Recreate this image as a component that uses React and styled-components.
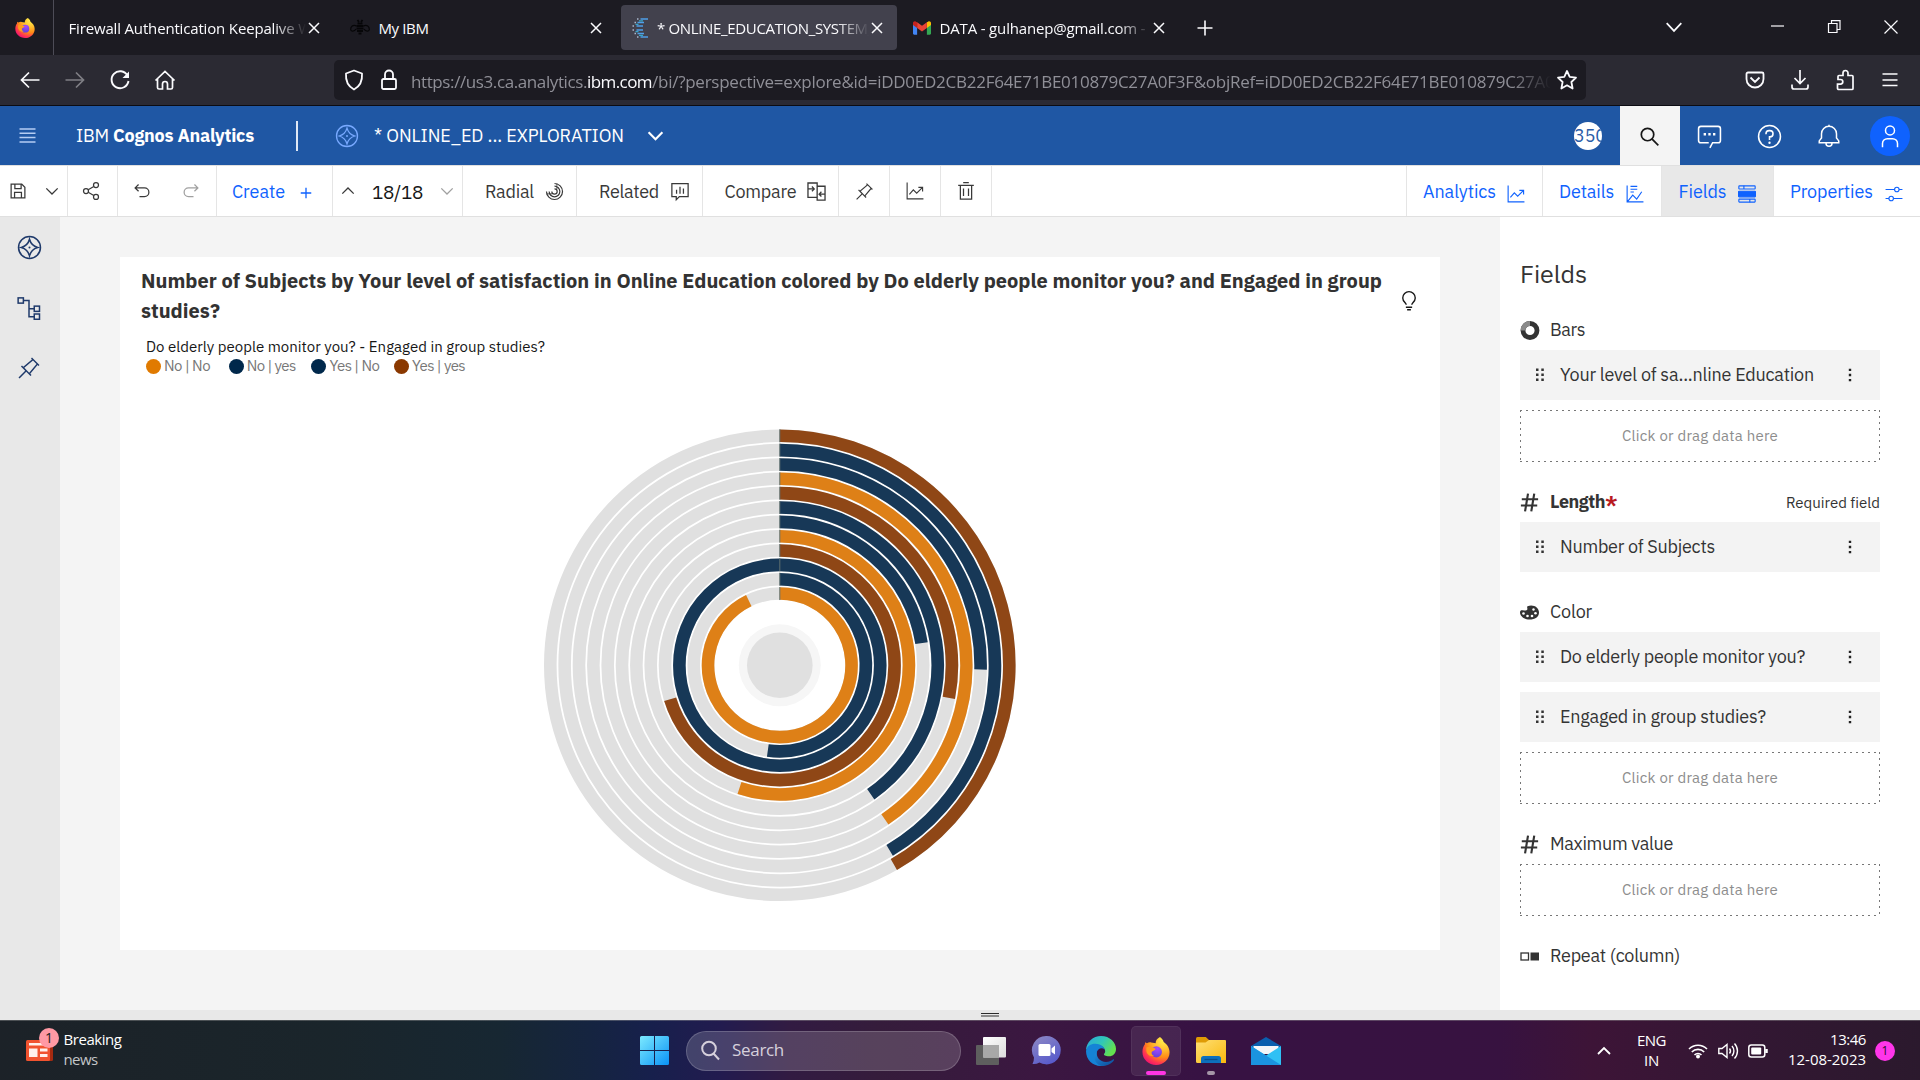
import React, { useLayoutEffect, useRef } from "react";
import styled, { createGlobalStyle, css } from "styled-components";

const PLEX = `"IBM Plex Sans", Roboto, "Liberation Sans", sans-serif`;
const SEGOE = `"Segoe UI", "Open Sans", "Noto Sans", sans-serif`;

const GlobalStyle = createGlobalStyle`
  *, *::before, *::after { box-sizing: border-box; }
  body { margin: 0; background: #f3f3f3; overflow: hidden; }
`;

/* ---------- text that keeps a set measure ---------- */
const FitSpan = styled.span`
  display: inline-block;
  flex: none;
  white-space: pre;
`;

function Fit({ w, children }) {
  const ref = useRef(null);
  useLayoutEffect(() => {
    const el = ref.current;
    el.style.letterSpacing = "0px";
    const natural = el.getBoundingClientRect().width;
    el.style.letterSpacing = `${(w - natural) / el.textContent.length}px`;
  }, [w, children]);
  return <FitSpan ref={ref}>{children}</FitSpan>;
}

/* ---------- icons ---------- */
const Svg = styled.svg`
  display: block;
  flex: none;
  overflow: visible;
`;

const Glyph = ({ size = 20, sw = 2, vb = 32, children }) => (
  <Svg width={size} height={size} viewBox={`0 0 ${vb} ${vb}`} fill="none" stroke="currentColor" strokeWidth={sw}>
    {children}
  </Svg>
);

const PATHS = {
  save: <path d="M5 5H22L27 10V27H5Z M11 5v7h10V5 M10.5 27V18h11v9" />,
  share: (
    <>
      <circle cx="8" cy="16" r="4" />
      <circle cx="24" cy="6.5" r="4" />
      <circle cx="24" cy="25.5" r="4" />
      <path d="M11.5 14 20.5 8.7M11.5 18l9 5.300" />
    </>
  ),
  undo: <path d="M10.500 5.500 5 11l5.500 5.500M5.500 11H20a7 7 0 0 1 0 14H12" />,
  redo: <path d="M21.500 5.500 27 11l-5.500 5.500M26.500 11H12a7 7 0 0 0 0 14h8" />,
  plus: <path d="M16 4V28M4 16H28" />,
  down: <path d="M3 10 16 23 29 10" />,
  up: <path d="M3 22 16 9 29 22" />,
  radial: (
    <>
      <path d="M16 2.500A13.500 13.500 0 1 1 2.500 16" />
      <path d="M16 7a9 9 0 1 1-9 9" />
      <path d="M16 11.500a4.500 4.500 0 1 1-4.500 4.500" />
      <path d="M20 2.500v4M20 8v4M2.500 20h5M8 20h4" strokeWidth="1.500" />
    </>
  ),
  related: <path d="M3 4H29V25H15l-5 5V25H3ZM10.500 14v6.500M16 9v11.500M21.500 12v8.500" />,
  compare: (
    <path d="M17 25H3V3H17V29H29V8H17M3 12h9M9 8.500l3.500 3.500L9 15.500M28 20h-7M23.500 16.500 20 20l3.500 3.500" />
  ),
  pin: (
    <path
      fill="currentColor"
      stroke="none"
      d="M28.590 13.310 30 11.900 20 2 18.690 3.420 19.870 4.600 8.380 14.320 6.660 12.610 5.250 14l5.660 5.680L2 28.580 3.410 30l8.910-8.910L18 26.750l1.390-1.420-1.710-1.710L27.400 12.130ZM16.260 22.200 9.800 15.740 21.290 6 26 10.710Z"
    />
  ),
  line: <path d="M2 1V30H31M6 22l7-8 6 6 10-10M22 9.500h7.500V17" />,
  trash: <path d="M12 12V24M20 12V24M3.500 7H28.500M7 7V29H25V7M11.500 2.500h9" />,
  details: <path d="M2 1V30H31M8 2.500H20M8 7.500H20M8 12.500h6M3 29l9-11 7 7 9-13" />,
  fields: (
    <>
      <rect x="1.500" y="1.500" width="29" height="5.500" rx="1" />
      <rect x="1" y="11" width="30" height="10" rx="1" fill="currentColor" />
      <rect x="1.500" y="25" width="29" height="5.500" rx="1" />
      <path d="M10.500 1.500V7M21 25v5.500" />
    </>
  ),
  sliders: (
    <>
      <circle cx="21" cy="8" r="4" />
      <circle cx="11" cy="24" r="4" />
      <path d="M1 8H17M25 8H31M1 24H7M15 24H31" />
    </>
  ),
  explore: (
    <>
      <circle cx="16" cy="16" r="14" />
      <path d="M16 5.500C17.500 11 21 14.500 26.500 16 21 17.500 17.500 21 16 26.500 14.500 21 11 17.500 5.500 16 11 14.500 14.500 11 16 5.500Z" />
      <circle cx="16" cy="16" r="1.300" fill="currentColor" stroke="none" />
    </>
  ),
  tree: (
    <>
      <rect x="1.500" y="2.500" width="7" height="7" />
      <rect x="23" y="13.500" width="7" height="7" />
      <rect x="23" y="24" width="7" height="7" />
      <path d="M8.500 6H16V27.500H23M16 17H23" />
    </>
  ),
  search: (
    <>
      <circle cx="13" cy="13" r="9.500" />
      <path d="M20 20 29.500 29.500" />
    </>
  ),
  chat: (
    <>
      <path d="M15 24H5a3 3 0 0 1-3-3V6a3 3 0 0 1 3-3H27a3 3 0 0 1 3 3V21a3 3 0 0 1-3 3H20L16.500 30.500" />
      <path d="M8.500 13h3M14.500 13h3M20.500 13h3" strokeWidth="3.200" />
    </>
  ),
  help: (
    <>
      <circle cx="16" cy="16" r="14" />
      <path d="M11.500 13v-.5a4 4 0 0 1 4-4h1a4 4 0 0 1 0 8H16V20.500" />
      <circle cx="16" cy="24" r="1.500" fill="currentColor" stroke="none" />
    </>
  ),
  bell: <path d="M16 1V4M3 25V22.500L6 18.500V13a10 10 0 0 1 20 0v5.500l3 4V25ZM12 25.500a4 4 0 0 0 8 0" />,
  user: (
    <>
      <circle cx="16" cy="8.500" r="6" />
      <path d="M6 31V26a6.500 6.500 0 0 1 6.500-6.500h7A6.500 6.500 0 0 1 26 26v5" />
    </>
  ),
  bulb: <path d="M11 26h10M13 30h6M11.500 22c0-3-5.500-5-5.500-11a10 10 0 0 1 20 0c0 6-5.500 8-5.500 11" />,
  hash: <path d="M3 10.500H30.500M1.500 21H29M13.500 1 8.500 31M24 1 19 31" strokeWidth="3.600" />,
};

const Icon = ({ name, size, sw }) => (
  <Glyph size={size} sw={sw}>
    {PATHS[name]}
  </Glyph>
);

const Firefox = ({ size, id }) => (
  <Svg width={size} height={size} viewBox="0 0 32 32">
    <defs>
      <radialGradient id={`${id}a`} cx="0.78" cy="0.1" r="1.05">
        <stop offset="0" stopColor="#fff44f" />
        <stop offset="0.35" stopColor="#ffbd2e" />
        <stop offset="0.6" stopColor="#ff8a16" />
        <stop offset="0.8" stopColor="#ff3750" />
        <stop offset="1" stopColor="#eb0878" />
      </radialGradient>
      <radialGradient id={`${id}b`} cx="0.6" cy="0.2" r="0.9">
        <stop offset="0" stopColor="#a84bff" />
        <stop offset="1" stopColor="#5b3fd6" />
      </radialGradient>
    </defs>
    <path
      fill={`url(#${id}a)`}
      d="M20.500 0c2 1.200 3.700 3.500 4.300 5.800C28.600 8.500 31.500 12.500 31.500 17.500 31.500 25.800 24.600 32 16.200 32 7.500 32 .5 25.600.5 17.200c0-3.600 1-6.500 2.700-8.600L3.600 6l2 1.200C7 6.200 9 5.800 10.500 6.200L15.600 7C15.500 4 17.500 1.500 20.500 0Z"
    />
    <circle cx="16.500" cy="17" r="6.300" fill={`url(#${id}b)`} />
    <path fill="#ff9d1e" d="M5 12c4-2 7.500 0 10.500 1.300 0 2.200-3.500 2-4.500 4-.5 1.700 1 3.700 3 4.200-5 1.500-8.500-2-9-5.500Z" />
  </Svg>
);

const Gmail = () => (
  <Svg width="18" height="14" viewBox="0 0 24 18">
    <path fill="#4285f4" d="M0 3v13.400C0 17.300.7 18 1.600 18H5.500V7Z" />
    <path fill="#34a853" d="M18.500 18h3.900c.9 0 1.600-.7 1.600-1.600V3l-5.500 4Z" />
    <path fill="#fbbc04" d="M18.500 1.200V9L24 4.900V2.400C24 .4 21.700-.7 20.100.5Z" />
    <path fill="#ea4335" d="M5.500 9V1.200L12 6l6.500-4.800V9L12 13.800Z" />
    <path fill="#c5221f" d="M0 2.400v2.500L5.500 9V1.200L3.900.5C2.300-.7 0 .4 0 2.400Z" />
  </Svg>
);

const CognosMark = () => (
  <Svg width="17" height="20" viewBox="0 0 17 20" fill="none" strokeWidth="1.300">
    <path stroke="#4f9fe8" d="M8.500 1H16M5.500 4.500H12M4.500 8H11M4.500 12H11M5.500 15.500H12M8.500 19H16" />
    <path stroke="#38a6c9" d="M7 2.800h4M3.500 6.300h3M3.500 13.700h3M7 17.300h4" />
    <path stroke="#a9b7cc" d="M5 1h1.500M2.500 4.500H4M.5 8H2M.5 12H2M2.500 15.500H4M5 19h1.500" />
  </Svg>
);

const Bee = () => (
  <Svg width="20" height="16" viewBox="0 0 20 16" fill="none" stroke="#060608" strokeWidth="1.800">
    <path d="M7.500 3.500h5M6.500 6h7M6.500 8.500h7M7 11h6M8.500 13.500h3M7.500 0 9 2M12.500 0 11 2" />
    <path strokeWidth="1.200" d="M6.500 6C3 4 .5 7 .7 9.500.9 12 4.500 11.500 6 9M13.500 6c3.500-2 6 1 5.800 3.500-.2 2.500-3.800 2-5.300-.5" />
  </Svg>
);

const Edge = () => (
  <Svg width="30" height="30" viewBox="0 0 30 30">
    <defs>
      <linearGradient id="edTop" x1="0" y1="0" x2="1" y2="0.5">
        <stop offset="0" stopColor="#2aa6dd" />
        <stop offset="0.55" stopColor="#31c7b8" />
        <stop offset="1" stopColor="#64e04f" />
      </linearGradient>
      <linearGradient id="edLow" x1="0" y1="0" x2="1" y2="1">
        <stop offset="0" stopColor="#1b8fe0" />
        <stop offset="1" stopColor="#0f4a96" />
      </linearGradient>
    </defs>
    <path fill="url(#edTop)" d="M0 14C.5 6 7 0 15 0c9 0 15 6.500 15 13 0 4.500-3 7.300-7 7.300-3.500 0-5.500-1.300-5-2.300 1.300-1.200 1.500-2.800.8-4.500C16.500 8 5 6 0 14Z" />
    <path fill="#1583d6" d="M0 15C1 8.500 8 6.300 13.500 8.500c3 1.200 5 3.200 5.300 5-3-2.500-7.300-1-8.300 3.500C9.500 22.500 13 28 18 29.700 8 31.500 0 24.500 0 15Z" />
    <path fill="url(#edLow)" d="M11 15.500c-1.500 5 3 10.500 9 10.500 3 0 5-1.200 7-2.500 1-.5 1.300.3.700 1.200C25 28 20 30 16 30 9.500 29 5.500 20 11 15.500Z" />
  </Svg>
);

const Folder = () => (
  <Svg width="30" height="27" viewBox="0 0 30 27">
    <defs>
      <linearGradient id="fo" x1="0" y1="0" x2="1" y2="1">
        <stop offset="0" stopColor="#ffdf75" />
        <stop offset="1" stopColor="#f9b90d" />
      </linearGradient>
    </defs>
    <path fill="#df9b05" d="M0 1.500Q0 0 1.500 0h8.300L13 3v4H0Z" />
    <path fill="url(#fo)" d="M0 5.500h9.500L13 3H29q1 0 1 1V26H1.500Q0 26 0 24.500Z" />
    <path fill="#0d70bd" d="M5 26V21.500q0-2.500 2.500-2.500h15q2.500 0 2.500 2.500V26Z" />
    <path stroke="#0a4f8c" strokeWidth="1.300" d="M8.500 22.500h13" />
  </Svg>
);

const Mail = () => (
  <Svg width="30" height="28" viewBox="0 0 30 28">
    <path fill="#0a5fae" d="M0 9 15 0 30 9v6H0Z" />
    <path fill="#f4f6f8" d="M2.500 9h25v8h-25Z" />
    <path fill="#2fc0f4" d="M0 9v19H30V9L15 18.500Z" />
    <path fill="#1b94e0" d="M0 9V28H30L15 18.500Z" />
  </Svg>
);

const TeamsChat = () => (
  <Svg width="29" height="29" viewBox="0 0 29 29">
    <defs>
      <linearGradient id="tc" x1="0.2" y1="0" x2="0.8" y2="1">
        <stop offset="0" stopColor="#8a86c4" />
        <stop offset="1" stopColor="#5457cc" />
      </linearGradient>
    </defs>
    <path fill="url(#tc)" d="M14.500 0a14.200 14.200 0 1 1-7 26.500Q4 28.500.5 28 2 25 2 21.500A14.200 14.200 0 0 1 14.500 0Z" />
    <rect x="6.500" y="8" width="12" height="12" rx="1.500" fill="#fff" />
    <path fill="#fff" d="M19.500 12.500 23 9.500v9L19.500 16Z" />
  </Svg>
);

const TaskView = () => (
  <Svg width="30" height="28" viewBox="0 0 30 28">
    <defs>
      <linearGradient id="tv" x1="0" y1="0" x2="1" y2="1">
        <stop offset="0" stopColor="#fff" />
        <stop offset="1" stopColor="#dcdcdc" />
      </linearGradient>
    </defs>
    <rect x="0" y="8" width="23" height="20" rx="1" fill="#5e5e5e" />
    <rect x="7" y="0" width="23" height="20.500" rx="1" fill="url(#tv)" />
    <rect x="7" y="8" width="16" height="12.500" fill="#a8a8a8" />
  </Svg>
);

const Windows = () => (
  <Svg width="29" height="29" viewBox="0 0 29 29">
    <defs>
      <linearGradient id="wi" x1="0" y1="0" x2="1" y2="1" gradientUnits="objectBoundingBox">
        <stop offset="0" stopColor="#7ceaff" />
        <stop offset="1" stopColor="#0a92f5" />
      </linearGradient>
    </defs>
    <path fill="url(#wi)" d="M1.500 0H14V14H0V1.500Q0 0 1.500 0ZM15 0h12.500Q29 0 29 1.500V14H15ZM0 15H14V29H1.500Q0 29 0 27.500ZM15 15H29v12.500Q29 29 27.500 29H15Z" />
  </Svg>
);

const NewsIcon = () => (
  <Svg width="27" height="21" viewBox="0 0 27 21">
    <rect x="14" y="0" width="13" height="21" rx="1.500" fill="#a52a10" />
    <rect x="0" y="0" width="24" height="21" rx="1.500" fill="#f1532f" />
    <path fill="#fff1ec" d="M3 3H21V5.500H3ZM3 8.500h8.500V17H3ZM14 8.500h7.500v3H14ZM14 14h7.500v3H14Z" />
  </Svg>
);

/* ---------- browser chrome ---------- */
const Screen = styled.div`
  width: 1920px;
  height: 1080px;
  display: flex;
  flex-direction: column;
  overflow: hidden;
  font-family: ${PLEX};
`;

const TabStrip = styled.div`
  height: 55px;
  flex: none;
  display: flex;
  align-items: center;
  background: #1c1b22;
  color: #fbfbfe;
  font: 15px/20px ${SEGOE};
`;

const PinnedTab = styled.div`
  width: 54px;
  height: 55px;
  padding-left: 15px;
  display: flex;
  align-items: center;
  border-right: 1px solid #4d4c57;
  margin-right: 3.500px;
`;

const Tab = styled.div`
  width: 276.500px;
  height: 45px;
  margin-right: 5px;
  padding: 0 14px 0 11px;
  display: flex;
  align-items: center;
  gap: 8.500px;
  border-radius: 4px;
  background: ${(p) => (p.$active ? "#42414d" : "transparent")};
`;

const TabTitle = styled.div`
  flex: 1;
  overflow: hidden;
  white-space: nowrap;
  margin-right: -6px;
  mask-image: ${(p) => (p.$fade ? "linear-gradient(to right, #000 calc(100% - 32px), transparent)" : "none")};
`;

const NewTab = styled.div`
  margin-left: 13px;
`;

const WindowControls = styled.div`
  margin-left: auto;
  display: flex;
  align-items: center;
  padding: 0 22px 2px 0;
  gap: 43.500px;
`;

const TabList = styled.div`
  margin-right: 45px;
`;

const NavBar = styled.div`
  height: 51px;
  flex: none;
  display: flex;
  align-items: center;
  padding: 0 20px 1px 20px;
  background: #2b2a33;
  border-bottom: 1px solid #0c0c12;
  color: #fbfbfe;
`;

const NavButtons = styled.div`
  display: flex;
  gap: 25px;
  width: 314px;
`;

const Dim = styled.span`
  opacity: 0.4;
`;

const UrlBar = styled.div`
  width: 1252px;
  height: 40px;
  padding: 0 9px 0 9px;
  display: flex;
  align-items: center;
  background: #1c1b22;
  border-radius: 5px;
`;

const LockSlot = styled.div`
  margin-left: 13px;
`;

const UrlText = styled.div`
  width: 1140px;
  margin: 4px auto 0 11px;
  overflow: hidden;
  white-space: nowrap;
  font: 17px/24px ${SEGOE};
  color: #8f8f97;
  mask-image: linear-gradient(to right, #000 calc(100% - 40px), transparent);
  b {
    font-weight: 400;
    color: #fbfbfe;
  }
`;

const NavTools = styled.div`
  margin-left: auto;
  display: flex;
  gap: 25px;
`;

const Cross = ({ size = 12, sw = 1.5 }) => (
  <Glyph size={size} vb={12} sw={sw}>
    <path d="M1 1 11 11M11 1 1 11" />
  </Glyph>
);

function Browser() {
  return (
    <>
      <TabStrip>
        <PinnedTab>
          <Firefox size={20} id="fs" />
        </PinnedTab>
        <Tab>
          <TabTitle $fade>
            <Fit w={247}>Firewall Authentication Keepalive Wi</Fit>
          </TabTitle>
          <Cross />
        </Tab>
        <Tab>
          <Bee />
          <TabTitle>
            <Fit w={50}>My IBM</Fit>
          </TabTitle>
          <Cross />
        </Tab>
        <Tab $active>
          <CognosMark />
          <TabTitle $fade>
            <Fit w={217}>* ONLINE_EDUCATION_SYSTEM_</Fit>
          </TabTitle>
          <Cross />
        </Tab>
        <Tab>
          <Gmail />
          <TabTitle $fade>
            <Fit w={206}>DATA - gulhanep@gmail.com -</Fit>
          </TabTitle>
          <Cross />
        </Tab>
        <NewTab>
          <Glyph size={16} vb={16} sw={1.6}>
            <path d="M8 .5V15.500M.5 8H15.500" />
          </Glyph>
        </NewTab>
        <WindowControls>
          <TabList>
            <Glyph size={18} sw={3}>
              <path d="M3 9 16 23 29 9" />
            </Glyph>
          </TabList>
          <Glyph size={13} vb={13} sw={1.2}>
            <path d="M0 6H13" />
          </Glyph>
          <Glyph size={13} vb={13} sw={1.2}>
            <path d="M.5 3.500H9V12.500H.5ZM3.500 3.500V.6H12V9.500H9" />
          </Glyph>
          <Glyph size={14} vb={14} sw={1.2}>
            <path d="M0.500 .5 13.500 13.500M13.500 .5 .5 13.500" />
          </Glyph>
        </WindowControls>
      </TabStrip>
      <NavBar>
        <NavButtons>
          <Glyph size={20} vb={20} sw={1.7}>
            <path d="M19.500 10H2M9 2.500 1.500 10 9 17.500" />
          </Glyph>
          <Dim>
            <Glyph size={20} vb={20} sw={1.7}>
              <path d="M.5 10H18M11 2.500 18.500 10 11 17.500" />
            </Glyph>
          </Dim>
          <Glyph size={20} vb={20} sw={1.9}>
            <path d="M17.500 5.500A8.500 8.500 0 1 0 18.500 11" />
            <path d="M19 1.500V8H12.500Z" fill="currentColor" stroke="none" />
          </Glyph>
          <Glyph size={20} vb={20} sw={1.7}>
            <path d="M.5 10.500 10 1.500 19.500 10.500M2.500 9V17.500q0 1.500 1.500 1.500H7.500V14a2.500 2.500 0 0 1 5 0V19H16q1.500 0 1.500-1.500V9" />
          </Glyph>
        </NavButtons>
        <UrlBar>
          <Glyph size={22} vb={22} sw={1.8}>
            <path d="M11 1.500 19 4.500C19.500 11 17.500 17 11 20.500 4.500 17 2.500 11 3 4.500Z" strokeLinejoin="round" />
          </Glyph>
          <LockSlot>
            <Glyph size={22} vb={22} sw={1.8}>
              <path d="M5.500 10h11A1.500 1.500 0 0 1 18 11.500v7a1.500 1.500 0 0 1-1.500 1.500h-11A1.500 1.500 0 0 1 4 18.500v-7A1.500 1.500 0 0 1 5.500 10ZM7 10V5.500a4 4 0 0 1 8 0V10" />
            </Glyph>
          </LockSlot>
          <UrlText>
            <Fit w={176}>https://us3.ca.analytics.</Fit>
            <b>
              <Fit w={65}>ibm.com</Fit>
            </b>
            <Fit w={929}>/bi/?perspective=explore&id=iDD0ED2CB22F64E71BE010879C27A0F3F&objRef=iDD0ED2CB22F64E71BE010879C27A0F3F</Fit>
          </UrlText>
          <Glyph size={20} vb={20} sw={1.8}>
            <path strokeLinejoin="round" d="M10 1 12.700 6.800 19 7.600 14.400 12 15.600 18.500 10 15.300 4.400 18.500 5.600 12 1 7.600 7.300 6.800Z" />
          </Glyph>
        </UrlBar>
        <NavTools>
          <Glyph size={20} vb={20} sw={1.8}>
            <path d="M3 2.500H17a1.500 1.500 0 0 1 1.500 1.500V9a8.500 8.500 0 0 1-17 0V4A1.500 1.500 0 0 1 3 2.500ZM5.500 7.500 10 12 14.500 7.500" />
          </Glyph>
          <Glyph size={20} vb={20} sw={1.7}>
            <path d="M10 0V13M4.500 8 10 13.500 15.500 8M2 14.500V17a2 2 0 0 0 2 2H16a2 2 0 0 0 2-2V14.500" />
          </Glyph>
          <Glyph size={20} vb={20} sw={1.7}>
            <path d="M3 19.500H17a1 1 0 0 0 1-1V6.500a1 1 0 0 0-1-1H13V3a2.500 2.500 0 0 0-5 0V5.500H4a1 1 0 0 0-1 1V9.500H5.500a2.300 2.300 0 0 1 0 4.600H2.500v4a1.300 1.300 0 0 0 1.300 1.400" />
          </Glyph>
          <Glyph size={20} vb={20} sw={1.6}>
            <path d="M2.500 4H17.500M2.500 10H17.500M2.500 15.500H17.500" />
          </Glyph>
        </NavTools>
      </NavBar>
    </>
  );
}

/* ---------- application header ---------- */
const Header = styled.header`
  height: 59px;
  flex: none;
  display: flex;
  align-items: center;
  padding-left: 19px;
  background: #1f57a4;
  color: #fff;
  font: 18px/24px ${PLEX};
  b {
    font-weight: 700;
  }
`;

const Brand = styled.div`
  margin-left: 40px;
  display: flex;
`;

const Divider = styled.div`
  width: 1.500px;
  height: 30px;
  margin: 0 37.500px 0 42px;
  background: #dfe8f5;
`;

const DocIcon = styled.div`
  color: #78a9ff;
  margin-right: 15px;
`;

const DocName = styled.div`
  display: flex;
  align-items: center;
  gap: 23px;
`;

const HeaderRight = styled.div`
  margin-left: auto;
  display: flex;
  align-items: center;
`;

const CountBadge = styled.div`
  width: 28px;
  height: 28px;
  margin-right: 18px;
  border-radius: 50%;
  overflow: hidden;
  background: #fff;
  color: #2a5ca8;
  font-size: 18px;
  line-height: 28px;
  white-space: nowrap;
`;

const HeaderButton = styled.div`
  width: 60px;
  height: 59px;
  padding: 1px 1.500px 0 0;
  display: flex;
  align-items: center;
  justify-content: center;
  ${(p) => p.$light && css`
    background: #f4f4f4;
    color: #161616;
  `}
`;

const Avatar = styled.div`
  width: 40px;
  height: 40px;
  margin-left: 1px;
  display: flex;
  align-items: center;
  justify-content: center;
  border-radius: 50%;
  background: #0f62fe;
`;

function AppHeader() {
  return (
    <Header>
      <Glyph size={17} vb={17} sw={1.5}>
        <path stroke="#b5cdf3" d="M.5 2H16.500M.5 6.300H16.500M.5 10.600H16.500M.5 15H16.500" />
      </Glyph>
      <Brand>
        <Fit w={37}>IBM </Fit>
        <b>
          <Fit w={141}>Cognos Analytics</Fit>
        </b>
      </Brand>
      <Divider />
      <DocIcon>
        <Icon name="explore" size={24} sw={1.7} />
      </DocIcon>
      <DocName>
        <Fit w={250}>* ONLINE_ED ... EXPLORATION</Fit>
        <Icon name="down" size={17} sw={4} />
      </DocName>
      <HeaderRight>
        <CountBadge>
          <Fit w={32}>350</Fit>
        </CountBadge>
        <HeaderButton $light>
          <Icon name="search" size={21} sw={2.6} />
        </HeaderButton>
        <HeaderButton>
          <Icon name="chat" size={25} />
        </HeaderButton>
        <HeaderButton>
          <Icon name="help" size={25} />
        </HeaderButton>
        <HeaderButton>
          <Icon name="bell" size={24} />
        </HeaderButton>
        <HeaderButton>
          <Avatar>
            <Icon name="user" size={24} />
          </Avatar>
        </HeaderButton>
      </HeaderRight>
    </Header>
  );
}

/* ---------- toolbar ---------- */
const Toolbar = styled.div`
  height: 52px;
  flex: none;
  display: flex;
  background: #fff;
  border-top: 1px solid #e0e0e0;
  border-bottom: 1px solid #e0e0e0;
  color: #393939;
  font: 18px/24px ${PLEX};
`;

const Cell = styled.div`
  width: ${(p) => p.$w}px;
  padding-left: ${(p) => p.$pl || 0}px;
  display: flex;
  align-items: center;
  gap: ${(p) => p.$gap || 0}px;
  justify-content: ${(p) => (p.$pl ? "flex-start" : "center")};
  border-right: 1px solid #e5e5e5;
  color: ${(p) => (p.$blue ? "#0f62fe" : "inherit")};
  ${FitSpan} {
    padding-top: 2px;
  }
`;

const PanelTabs = styled.div`
  margin-left: auto;
  display: flex;
  border-left: 1px solid #e5e5e5;
`;

const PanelTab = styled(Cell)`
  color: #0f62fe;
  background: ${(p) => (p.$selected ? "#e8e8e8" : "transparent")};
  border-right: ${(p) => (p.$plain ? "0" : "1px solid #e5e5e5")};
  svg {
    margin-top: 5px;
  }
`;

const Muted = styled.span`
  color: #a0a0a0;
`;

const Counter = styled.span`
  color: #161616;
  font-size: 19px;
`;

const Lowered = styled.span`
  padding-top: 4px;
`;

function AppToolbar() {
  return (
    <Toolbar>
      <Cell $w={68} $pl={8} $gap={17}>
        <Icon name="save" size={20} />
        <Icon name="down" size={14} sw={3} />
      </Cell>
      <Cell $w={50} $pl={13}>
        <Icon name="share" size={20} />
      </Cell>
      <Cell $w={99} $pl={14} $gap={28.5}>
        <Icon name="undo" size={20} />
        <Muted>
          <Icon name="redo" size={20} />
        </Muted>
      </Cell>
      <Cell $w={116} $pl={15} $gap={14} $blue>
        <Fit w={53}>Create</Fit>
        <Lowered>
          <Icon name="plus" size={14} sw={3} />
        </Lowered>
      </Cell>
      <Cell $w={130} $pl={8} $gap={17}>
        <Icon name="up" size={14} sw={3} />
        <Counter>
          <Fit w={51}>18/18</Fit>
        </Counter>
        <Muted>
          <Icon name="down" size={14} sw={3} />
        </Muted>
      </Cell>
      <Cell $w={114} $pl={22} $gap={11}>
        <Fit w={49}>Radial</Fit>
        <Icon name="radial" size={19} />
      </Cell>
      <Cell $w={126} $pl={22} $gap={11}>
        <Fit w={60}>Related</Fit>
        <Icon name="related" size={20} />
      </Cell>
      <Cell $w={136} $pl={21.5} $gap={9}>
        <Fit w={72}>Compare</Fit>
        <Icon name="compare" size={21} />
      </Cell>
      <Cell $w={51}>
        <Icon name="pin" size={19} />
      </Cell>
      <Cell $w={51}>
        <Icon name="line" size={18} />
      </Cell>
      <Cell $w={51}>
        <Icon name="trash" size={20} />
      </Cell>
      <PanelTabs>
        <PanelTab $w={136} $pl={16} $gap={11}>
          <Fit w={73}>Analytics</Fit>
          <Icon name="line" size={18} />
        </PanelTab>
        <PanelTab $w={119} $pl={16} $gap={12}>
          <Fit w={55}>Details</Fit>
          <Icon name="details" size={18} />
        </PanelTab>
        <PanelTab $w={112} $pl={16.5} $gap={11} $selected>
          <Fit w={48}>Fields</Fit>
          <Icon name="fields" size={18} />
        </PanelTab>
        <PanelTab $w={146} $pl={16} $gap={12} $plain>
          <Fit w={83}>Properties</Fit>
          <Icon name="sliders" size={18} />
        </PanelTab>
      </PanelTabs>
    </Toolbar>
  );
}

/* ---------- workspace ---------- */
const Workspace = styled.main`
  height: 793px;
  flex: none;
  display: flex;
`;

const Rail = styled.nav`
  width: 60px;
  padding: 18px 1.500px 0 0;
  display: flex;
  flex-direction: column;
  align-items: center;
  gap: 36px;
  background: #e8e8e8;
  color: #1f3a6b;
`;

const Canvas = styled.section`
  width: 1440px;
  padding: 40px 60px 60px;
  background: #f4f4f4;
`;

const Card = styled.article`
  height: 693px;
  padding: 9px 21px 0;
  background: #fff;
  color: #161616;
`;

const CardHead = styled.div`
  height: 60px;
  display: flex;
  justify-content: space-between;
  align-items: center;
`;

const CardTitle = styled.h1`
  margin: 0;
  display: flex;
  flex-direction: column;
  align-items: flex-start;
  font: 700 20px/30px ${PLEX};
  color: #323232;
`;

const Bulb = styled.div`
  padding-top: 10px;
`;

const LegendTitle = styled.div`
  height: 20px;
  margin: 11px 0 -1px 5px;
  font-size: 15px;
  line-height: 20px;
`;

const Legend = styled.div`
  height: 20px;
  padding-left: 5px;
  display: flex;
  font-size: 15px;
  line-height: 20px;
  color: #777;
`;

const LegendItem = styled.div`
  width: 82.700px;
  display: flex;
  align-items: center;
  gap: 3px;
  &::before {
    content: "";
    width: 15px;
    height: 15px;
    border-radius: 50%;
    background: ${(p) => p.$color};
  }
`;

const ChartSvg = styled.svg`
  display: block;
  margin: 49px auto 0;
`;

const BROWN = "#8f4716";
const NAVY = "#173857";
const ORANGE = "#de8017";

const BARS = [
  [BROWN, 150.2],
  [NAVY, 149.3],
  [NAVY, 91.2],
  [ORANGE, 145.7],
  [BROWN, 100.9],
  [NAVY, 144.8],
  [NAVY, 81.1],
  [ORANGE, 198.2],
  [BROWN, 252.8],
  [NAVY, 360],
  [NAVY, 188],
  [ORANGE, 334.4],
];

const CX = 239.8;
const CY = 240.3;

function RadialChart() {
  return (
    <ChartSvg width="480" height="480" viewBox="0 0 480 480" fill="none">
      {BARS.map(([color, angle], i) => {
        const r = 229.5 - i * 14.34;
        const a = (angle * Math.PI) / 180;
        const x = CX + r * Math.sin(a);
        const y = CY - r * Math.cos(a);
        return (
          <g key={i} strokeWidth="12.600">
            <circle cx={CX} cy={CY} r={r} stroke="#e0e0e0" />
            {angle === 360 ? (
              <circle cx={CX} cy={CY} r={r} stroke={color} />
            ) : (
              <path d={`M${CX} ${CY - r}A${r} ${r} 0 ${angle > 180 ? 1 : 0} 1 ${x} ${y}`} stroke={color} />
            )}
            <path d={`M${CX} ${CY - r - 6.5}v13`} stroke="#5f6f6e" strokeWidth="1" />
          </g>
        );
      })}
      <circle cx={CX} cy={CY} r="41" fill="#f6f6f6" />
      <circle cx={CX} cy={CY} r="32.800" fill="#e0e0e0" />
    </ChartSvg>
  );
}

const FieldsPanel = styled.aside`
  width: 420px;
  padding: 37px 40px 0 20px;
  background: #fff;
  color: #343434;
  font: 18px/24px ${PLEX};
  h2 {
    margin: 0 0 16px;
    font: 400 25px/40px ${PLEX};
  }
`;

const Slot = styled.section`
  display: flex;
  flex-direction: column;
  gap: 10px;
  margin-bottom: 20px;
`;

const SlotLabel = styled.div`
  height: 40px;
  margin-bottom: -10px;
  display: flex;
  align-items: center;
  gap: 11px;
  font-weight: ${(p) => (p.$bold ? 700 : 400)};
`;

const Star = styled.span`
  margin: 1px 0 0 -11px;
  color: #b81921;
  font-weight: 700;
  font-size: 21px;
`;

const Required = styled.span`
  margin-left: auto;
  padding-top: 2px;
  font-size: 15px;
  font-weight: 400;
`;

const FieldRow = styled.div`
  height: 50px;
  padding: 0 24px 0 16px;
  display: flex;
  align-items: center;
  gap: 16px;
  background: #f3f3f3;
  > svg:last-child {
    margin-left: auto;
  }
`;

const dashX = "repeating-linear-gradient(to right, #777 0 2px, transparent 2px 6px)";
const dashY = "repeating-linear-gradient(to bottom, #777 0 2px, transparent 2px 6px)";

const DropZone = styled.div`
  height: 52px;
  display: flex;
  align-items: center;
  justify-content: center;
  color: #8d8d8d;
  font-size: 15px;
  background: ${dashX} top / 100% 1px no-repeat, ${dashX} bottom / 100% 1px no-repeat,
    ${dashY} left / 1px 100% no-repeat, ${dashY} right / 1px 100% no-repeat;
`;

const Grip = () => (
  <Svg width="8" height="14" viewBox="0 0 8 14" fill="#333">
    {[0, 5, 10].map((y) => (
      <path key={y} d={`M0 ${y + 0.5}h2.500v2.500H0ZM5.300 ${y + 0.5}h2.500v2.500h-2.500Z`} />
    ))}
  </Svg>
);

const Kebab = () => (
  <Svg width="12" height="14" viewBox="0 0 12 14" fill="#222">
    <path d="M4.800 .7h2.400v2.400H4.800ZM4.800 5.800h2.400v2.400H4.800ZM4.800 10.900h2.400v2.400H4.800Z" />
  </Svg>
);

const Field = ({ w, children }) => (
  <FieldRow>
    <Grip />
    <Fit w={w}>{children}</Fit>
    <Kebab />
  </FieldRow>
);

const Drop = () => (
  <DropZone>
    <Fit w={156}>Click or drag data here</Fit>
  </DropZone>
);

const DonutIcon = () => (
  <Svg width="19" height="19" viewBox="0 0 19 19" fill="none" strokeWidth="4.800">
    <circle cx="10" cy="9.500" r="7" stroke="#333" />
    <path d="M3 9.500a7 7 0 0 1 7-7" stroke="#8a8a8a" />
  </Svg>
);

const PaletteIcon = () => (
  <Svg width="19" height="15" viewBox="0 0 19 15">
    <path
      fill="#333"
      d="M7.500 1.200C13-1 19 2 19 7.500 19 12 15 14.500 9.500 14.500 4 14.500 0 11 0 7.500 0 5.500 1 5 2.800 5.200 5 5.500 6.500 5.800 7.300 4.500 7.800 3.500 6.500 2 7.500 1.200Z"
    />
    <g fill="#fff">
      <circle cx="3.500" cy="8.500" r="1.300" />
      <circle cx="7.500" cy="11" r="1.300" />
      <circle cx="12" cy="11" r="1.300" />
      <circle cx="15.500" cy="8.300" r="1.300" />
      <circle cx="13.500" cy="4.500" r="1.200" />
    </g>
  </Svg>
);

const RepeatIcon = () => (
  <Svg width="19" height="9" viewBox="0 0 19 9">
    <rect x="1" y="1" width="7.500" height="7" fill="none" stroke="#333" strokeWidth="1.300" />
    <rect x="10.500" y="0.500" width="8.500" height="8" fill="#333" />
  </Svg>
);

function Work() {
  return (
    <Workspace>
      <Rail>
        <Icon name="explore" size={25} />
        <Icon name="tree" size={24} />
        <Icon name="pin" size={24} />
      </Rail>
      <Canvas>
        <Card>
          <CardHead>
            <CardTitle>
              <Fit w={1241}>
                Number of Subjects by Your level of satisfaction in Online Education colored by Do elderly people monitor you? and Engaged in group
              </Fit>
              <Fit w={79}>studies?</Fit>
            </CardTitle>
            <Bulb>
              <Icon name="bulb" size={20} sw={2.2} />
            </Bulb>
          </CardHead>
          <LegendTitle>
            <Fit w={399}>Do elderly people monitor you? - Engaged in group studies?</Fit>
          </LegendTitle>
          <Legend>
            <LegendItem $color="#e07a00">
              <Fit w={46}>No | No</Fit>
            </LegendItem>
            <LegendItem $color="#00284b">
              <Fit w={49}>No | yes</Fit>
            </LegendItem>
            <LegendItem $color="#00284b">
              <Fit w={50}>Yes | No</Fit>
            </LegendItem>
            <LegendItem $color="#8a3800">
              <Fit w={53}>Yes | yes</Fit>
            </LegendItem>
          </Legend>
          <RadialChart />
        </Card>
      </Canvas>
      <FieldsPanel>
        <h2>
          <Fit w={67}>Fields</Fit>
        </h2>
        <Slot>
          <SlotLabel>
            <DonutIcon />
            <Fit w={35}>Bars</Fit>
          </SlotLabel>
          <Field w={254}>Your level of sa...nline Education</Field>
          <Drop />
        </Slot>
        <Slot>
          <SlotLabel $bold>
            <Icon name="hash" size={19} />
            <Fit w={55}>Length</Fit>
            <Star>*</Star>
            <Required>
              <Fit w={94}>Required field</Fit>
            </Required>
          </SlotLabel>
          <Field w={155}>Number of Subjects</Field>
        </Slot>
        <Slot>
          <SlotLabel>
            <PaletteIcon />
            <Fit w={42}>Color</Fit>
          </SlotLabel>
          <Field w={245}>Do elderly people monitor you?</Field>
          <Field w={206}>Engaged in group studies?</Field>
          <Drop />
        </Slot>
        <Slot>
          <SlotLabel>
            <Icon name="hash" size={19} />
            <Fit w={123}>Maximum value</Fit>
          </SlotLabel>
          <Drop />
        </Slot>
        <Slot>
          <SlotLabel>
            <RepeatIcon />
            <Fit w={130}>Repeat (column)</Fit>
          </SlotLabel>
        </Slot>
      </FieldsPanel>
    </Workspace>
  );
}

const Splitter = styled.div`
  height: 10px;
  flex: none;
  padding: 3px 0 0 981px;
  background: #e8e8e8;
  &::before {
    content: "";
    display: block;
    width: 18px;
    height: 4px;
    border-top: 1px solid #2b2b2b;
    border-bottom: 2px solid #8d8d8d;
  }
`;

/* ---------- desktop taskbar ---------- */
const Taskbar = styled.footer`
  height: 60px;
  flex: none;
  display: flex;
  align-items: center;
  border-top: 1px solid rgba(150, 150, 150, 0.4);
  color: #fff;
  font: 15px/20px ${SEGOE};
  background: linear-gradient(
    to right,
    #1c2228 0, #1a252b 330px, #172732 500px, #152440 590px, #17204c 650px, #221b4f 720px,
    #321b42 790px, #351c3b 880px, #3b1741 1040px, #371243 1200px, #371240 1500px,
    #3d1437 1590px, #331733 1740px, #2b192d 1920px
  );
`;

const News = styled.div`
  width: 640px;
  padding-left: 26px;
  display: flex;
  align-items: center;
  gap: 10.500px;
`;

const NewsArt = styled.div`
  position: relative;
`;

const PinkBadge = styled.div`
  position: absolute;
  left: 13px;
  top: -12px;
  width: 20px;
  height: 20px;
  border-radius: 50%;
  background: #ff99a4;
  color: #1c1c1c;
  font-size: 14px;
  line-height: 20px;
  text-align: center;
`;

const Stack = styled.div`
  display: flex;
  flex-direction: column;
  align-items: ${(p) => p.$align || "flex-start"};
  padding-bottom: ${(p) => p.$lift ?? 4}px;
`;

const Faint = styled.span`
  color: #c3c6c8;
`;

const SearchPill = styled.div`
  width: 275px;
  height: 40px;
  margin: 0 15px 0 17px;
  padding: 0 0 1px 14px;
  display: flex;
  align-items: center;
  gap: 12px;
  border: 1px solid rgba(255, 255, 255, 0.18);
  border-radius: 20px;
  background: rgba(255, 255, 255, 0.17);
  color: #d6d0dc;
  font-size: 17px;
`;

const Pinned = styled.div`
  margin-left: 15px;
  display: flex;
`;

const AppButton = styled.div`
  position: relative;
  width: 50px;
  height: 50px;
  margin-right: 5px;
  display: flex;
  align-items: center;
  justify-content: center;
  border-radius: 5px;
  ${(p) => p.$active && css`
    background: rgba(255, 255, 255, 0.08);
    box-shadow: inset 0 0 0 1px rgba(255, 255, 255, 0.06);
  `}
  &::after {
    content: "";
    position: absolute;
    bottom: 1px;
    width: ${(p) => (p.$active ? 20 : p.$open ? 8 : 0)}px;
    height: 4px;
    border-radius: 2px;
    background: ${(p) => (p.$active ? "#ff35e4" : "#a596a8")};
  }
`;

const Tray = styled.div`
  margin-left: auto;
  padding-right: 25px;
  display: flex;
  align-items: center;
`;

const TrayIcons = styled.div`
  margin: 0 20px 0 22px;
  display: flex;
  gap: 10px;
`;

const Language = styled.div`
  margin-left: 26.500px;
`;

const Notice = styled.div`
  width: 20px;
  height: 20px;
  margin-left: 9px;
  border-radius: 50%;
  background: #ff35ea;
  color: #2b0d2a;
  font-size: 12px;
  line-height: 20px;
  text-align: center;
`;

function DesktopBar() {
  return (
    <Taskbar>
      <News>
        <NewsArt>
          <NewsIcon />
          <PinkBadge>1</PinkBadge>
        </NewsArt>
        <Stack>
          <Fit w={58}>Breaking</Fit>
          <Faint>
            <Fit w={34}>news</Fit>
          </Faint>
        </Stack>
      </News>
      <Windows />
      <SearchPill>
        <Glyph size={19} vb={19} sw={2}>
          <circle cx="8" cy="7.500" r="6.800" />
          <path d="M12.500 12.500 18 18.500" />
        </Glyph>
        <Fit w={52}>Search</Fit>
      </SearchPill>
      <TaskView />
      <Pinned>
        <AppButton>
          <TeamsChat />
        </AppButton>
        <AppButton>
          <Edge />
        </AppButton>
        <AppButton $active>
          <Firefox size={28} id="fl" />
        </AppButton>
        <AppButton $open>
          <Folder />
        </AppButton>
        <AppButton>
          <Mail />
        </AppButton>
      </Pinned>
      <Tray>
        <Glyph size={14} vb={14} sw={1.8}>
          <path d="M1 10 7 4 13 10" />
        </Glyph>
        <Language>
          <Stack $align="center" $lift={2}>
            <Fit w={29}>ENG</Fit>
            <Fit w={15}>IN</Fit>
          </Stack>
        </Language>
        <TrayIcons>
          <Glyph size={20} vb={20} sw={1.6}>
            <path d="M1 8a12.700 12.700 0 0 1 18 0M3.800 11a8.700 8.700 0 0 1 12.400 0M6.500 14a5 5 0 0 1 7 0" />
            <circle cx="10" cy="15.500" r="2" fill="currentColor" stroke="none" />
          </Glyph>
          <Glyph size={20} vb={20} sw={1.4}>
            <path d="M.8 7.500H4L9 3.500V16.500L4 12.500H.8ZM11.500 7.500a4 4 0 0 1 0 5M14 5a7.500 7.500 0 0 1 0 10M16.500 2.500a11 11 0 0 1 0 15" />
          </Glyph>
          <Glyph size={20} vb={20} sw={1.5}>
            <rect x=".8" y="4" width="16" height="12" rx="2.500" />
            <rect x="3.200" y="6.500" width="10" height="7" rx="1" fill="currentColor" stroke="none" />
            <path d="M18.500 8v4" strokeWidth="2.500" />
          </Glyph>
        </TrayIcons>
        <Stack $align="flex-end">
          <Fit w={36}>13:46</Fit>
          <Fit w={78}>12-08-2023</Fit>
        </Stack>
        <Notice>1</Notice>
      </Tray>
    </Taskbar>
  );
}

export default function App() {
  return (
    <Screen>
      <GlobalStyle />
      <Browser />
      <AppHeader />
      <AppToolbar />
      <Work />
      <Splitter />
      <DesktopBar />
    </Screen>
  );
}
